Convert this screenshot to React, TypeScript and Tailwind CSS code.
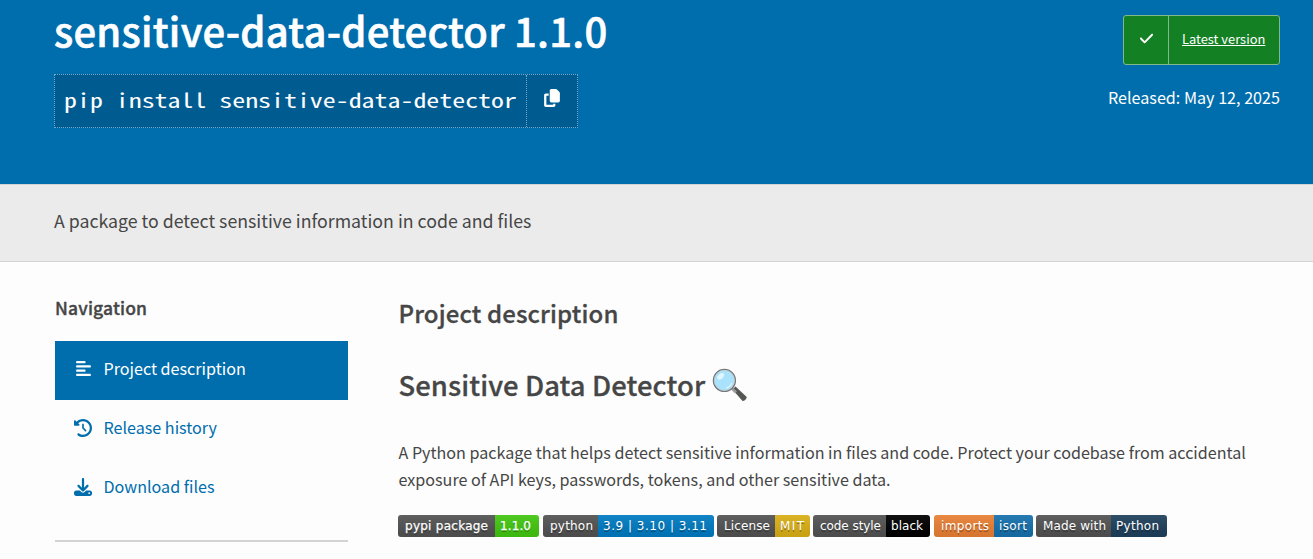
import { FaAlignLeft, FaCheck, FaClockRotateLeft, FaCopy, FaDownload } from "react-icons/fa6";

const badges = [
  { l: "pypi package", r: "1.1.0", lw: "w-[97px]", rw: "w-[44px]", lc: "bg-[#555]", rc: "bg-[#44cc11]", heavy: true, lt: 83, rt: 31, gap: "mr-1" },
  { l: "python", r: "3.9 | 3.10 | 3.11", lw: "w-[55px]", rw: "w-[116px]", lc: "bg-[#555]", rc: "bg-[#007ec6]", heavy: false, lt: 43, rt: 104, gap: "mr-[3px]" },
  { l: "License", r: "MIT", lw: "w-[58px]", rw: "w-[35px]", lc: "bg-[#555]", rc: "bg-[#dfb317]", heavy: false, lt: 46, rt: 24, gap: "mr-[3px]" },
  { l: "code style", r: "black", lw: "w-[73px]", rw: "w-[44px]", lc: "bg-[#555]", rc: "bg-[#000]", heavy: false, lt: 61, rt: 32, gap: "mr-1" },
  { l: "imports", r: "isort", lw: "w-[60px]", rw: "w-[39px]", lc: "bg-[#ef8336]", rc: "bg-[#1674b1]", heavy: false, lt: 48, rt: 28, gap: "mr-[3px]" },
  { l: "Made with", r: "Python", lw: "w-[75px]", rw: "w-[56px]", lc: "bg-[#555]", rc: "bg-[#1f425f]", heavy: false, lt: 63, rt: 43, gap: "" },
];

function BadgeText({ text, width, heavy }: { text: string; width: number; heavy: boolean }) {
  return (
    <svg width={width} height="22" className="block overflow-visible" fontFamily="'DejaVu Sans', Verdana, sans-serif" fontSize="12">
      <text x="0" y="16.5" textLength={width} fill="#010101" fillOpacity=".3">{text}</text>
      <text x="0" y="15.3" textLength={width} fill="#fff" stroke="#fff" strokeWidth={heavy ? 0.25 : 0}>{text}</text>
    </svg>
  );
}

function Magnifier() {
  return (
    <svg width="36" height="36" viewBox="0 0 36 36" className="block">
      <path d="M20.5 21.5l3-3 11 10.2c1.2 1.2-2.8 5.2-4.2 4z" fill="#545753" />
      <path d="M20 20.5l4 4" stroke="#9b9b9b" strokeWidth="2.5" />
      <circle cx="12.4" cy="12.4" r="11" fill="#a9e2fc" stroke="#757779" strokeWidth="1.3" />
      <circle cx="12.4" cy="12.4" r="10" fill="none" stroke="#c6cbce" strokeWidth="0.9" />
      <ellipse cx="8.7" cy="8.3" rx="4" ry="2.5" transform="rotate(-42 8.7 8.3)" fill="#dff5ff" />
      <path d="M14 20c3-.7 5-2.6 6-5" stroke="#daf3ff" strokeWidth="1.5" fill="none" />
    </svg>
  );
}

export default function App() {
  return (
    <div className="h-[559px] overflow-hidden bg-[#fdfdfd] font-['Noto_Sans_CJK_SC',sans-serif] text-[16.12px] text-[#464646]">
      <header className="flex h-[184px] justify-between bg-[#006dad] pr-[33px] pl-[54px] text-white">
        <div>
          <h1 className="h-[62px] text-[40px] leading-[60px] font-medium tracking-[0.25px] whitespace-nowrap [-webkit-text-stroke:0.6px_white]">sensitive-data-detector 1.1.0</h1>
          <div className="mt-[12px] flex h-[54px] w-[524px] border border-dotted border-[#6ea8cc] bg-[#005b91]">
            <span className="w-[471px] pl-[9px] font-['Noto_Sans_Mono_CJK_SC','Liberation_Mono',monospace] text-[20px] leading-[50px] whitespace-pre">
              <span className="inline-block origin-left scale-x-[1.294]">pip install sensitive-data-detector</span>
            </span>
            <span className="flex flex-1 items-center justify-center border-l border-dotted border-[#6ea8cc] pb-[6px]">
              <FaCopy className="size-[18px]" />
            </span>
          </div>
        </div>
        <div className="flex flex-col items-end pt-[15px]">
          <div className="flex h-[50px] w-[157px] rounded-[3px] border border-[#82b98a] bg-[#148024]">
            <span className="flex w-[44px] items-center justify-center pb-[3px]"><FaCheck className="size-[15px]" /></span>
            <span className="flex-1 border-l border-[#82b98a] pl-[13px] text-[12.9px] leading-[46px] whitespace-nowrap underline">Latest version</span>
          </div>
          <p className="mt-[19px] text-[16.15px] leading-[27px] whitespace-nowrap">Released: May 12, 2025</p>
        </div>
      </header>
      <section className="h-[78px] border-y border-[#d3d3d3] bg-[#ebebeb] pl-[54px] text-[17.74px] leading-[70px]">A package to detect sensitive information in code and files</section>
      <main className="flex pl-[55px]">
        <aside className="w-[293px]">
          <h3 className="mt-[32px] h-[27px] text-[17.5px] leading-[27px] font-medium tracking-[0.15px] [-webkit-text-stroke:0.35px_#464646]">Navigation</h3>
          <nav className="mt-[20px] h-[201px] border-b-2 border-[#d3d3d3] text-[#006dad]">
            <a className="flex h-[59px] items-center bg-[#006dad] pb-[4px] pl-[20px] text-white">
              <FaAlignLeft className="mr-[12px] size-[17px]" /><span className="-ml-[0.5px]">Project description</span>
            </a>
            <a className="flex h-[59px] items-center pb-[4px] pl-[19px]">
              <FaClockRotateLeft className="mr-[12px] size-[18px]" /><span className="-ml-[0.5px]">Release history</span>
            </a>
            <a className="flex h-[59px] items-center pb-[4px] pl-[19px]">
              <FaDownload className="mr-[12px] size-[18px]" /><span className="-ml-[0.5px]">Download files</span>
            </a>
          </nav>
        </aside>
        <article className="ml-[50px] w-[870px]">
          <h2 className="mt-[33px] h-[36px] pl-[0.5px] text-[24px] leading-[36px] font-medium tracking-[0.13px] [-webkit-text-stroke:0.3px_#464646]">Project description</h2>
          <h1 className="mt-[31px] flex h-[44px] items-center pl-[0.5px] text-[27.4px] leading-[44px] font-medium tracking-[0.1px] [-webkit-text-stroke:0.3px_#464646]">
            <span className="mr-[6.5px]">Sensitive Data Detector</span><span className="mt-[4px]"><Magnifier /></span>
          </h1>
          <p className="mt-[33px] pl-[0.5px] leading-[27px] whitespace-nowrap">
            A Python package that helps detect sensitive information in files and code. Protect your codebase from accidental<br />
            exposure of API keys, passwords, tokens, and other sensitive data.
          </p>
          <div className="mt-[22px] flex">
            {badges.map((b) => (
              <div key={b.l} className={`relative flex h-[22px] overflow-hidden rounded-[3px] ${b.gap}`}>
                <span className={`pl-[7px] ${b.lw} ${b.lc}`}><span className="relative z-10"><BadgeText text={b.l} width={b.lt} heavy={b.heavy} /></span></span>
                <span className={`pl-[5px] ${b.rw} ${b.rc}`}><span className="relative z-10"><BadgeText text={b.r} width={b.rt} heavy={b.heavy} /></span></span>
                <span className="absolute inset-0 bg-linear-to-b from-[#bbb]/10 to-black/10" />
              </div>
            ))}
          </div>
        </article>
      </main>
    </div>
  );
}
